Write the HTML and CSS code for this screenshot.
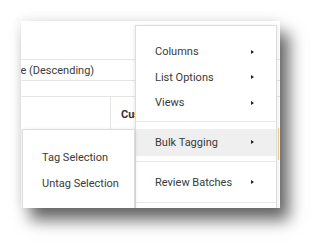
FILE: index.html
```html
<!DOCTYPE html>
<html lang="en">

<head>
    <meta charset="UTF-8">
    <title>Bulk Tagging Menu</title>
    <link rel="stylesheet" href="styles.css">
</head>

<body>
    <div class="shot">
        <!-- Page behind the menus -->
        <div class="sort-row"><span class="sort-text">Name (Descending)</span></div>
        <div class="table-head">
            <div class="cell"></div>
            <div class="cell cell-bold">Customer</div>
        </div>

        <!-- Main context menu -->
        <div class="menu">
            <div class="menu-item">Columns <span class="arrow"></span></div>
            <div class="menu-item">List Options <span class="arrow"></span></div>
            <div class="menu-item">Views <span class="arrow"></span></div>
            <div class="divider divider-first"></div>
            <div class="menu-item active">Bulk Tagging <span class="arrow"></span></div>
            <div class="divider"></div>
            <div class="menu-item menu-item-tall">Review Batches <span class="arrow"></span></div>
            <div class="divider divider-last"></div>
        </div>
        <div class="scroll-mark"></div>

        <!-- Bulk Tagging submenu -->
        <div class="submenu">
            <div class="sub-item">Tag Selection</div>
            <div class="sub-item">Untag Selection</div>
        </div>
    </div>
</body>

</html>
```

FILE: styles.css
```css
body {
    margin: 0;
    width: 322px;
    height: 250px;
    background-color: #ffffff;
    font-family: Roboto, "Liberation Sans", sans-serif;
    font-size: 11px;
    color: #3a3a3a;
    overflow: hidden;
}

.shot {
    position: relative;
    margin: 21px 0 0 21px;
    width: 259px;
    height: 187px;
    padding-top: 38px;
    box-sizing: border-box;
    background-color: #ffffff;
    overflow: hidden;
    box-shadow: 9px 12px 15px rgba(0, 0, 0, 0.6), -2px -2px 10px rgba(0, 0, 0, 0.08);
}

.sort-row {
    height: 22px;
    border-top: 1px solid #e6e6e6;
    border-bottom: 1px solid #e6e6e6;
    box-sizing: border-box;
    display: flex;
    align-items: center;
    white-space: nowrap;
}

.sort-text {
    margin-left: -24px;
}

.table-head {
    margin-top: 15px;
    height: 33px;
    border-top: 1px solid #e6e6e6;
    display: grid;
    grid-template-columns: 89px 1fr;
}

.cell {
    display: flex;
    align-items: center;
    padding-left: 10px;
}

.cell-bold {
    border-left: 1px solid #e6e6e6;
    font-weight: bold;
    color: #333333;
    padding-top: 2px;
}

.menu {
    position: absolute;
    left: 114px;
    top: 4px;
    width: 142px;
    height: 200px;
    padding-top: 13px;
    box-sizing: border-box;
    background-color: #ffffff;
    border: 1px solid #dddddd;
    box-shadow: 0 1px 4px rgba(0, 0, 0, 0.12);
}

.menu-item {
    height: 25.5px;
    display: flex;
    align-items: center;
    justify-content: space-between;
    padding: 0 22px 0 19px;
}

.menu-item.active {
    height: 27px;
    background-color: #efefef;
}

.menu-item-tall {
    height: 31px;
}

.divider {
    height: 5px;
    margin-bottom: 5px;
    border-bottom: 1px solid #e8e8e8;
}

.divider-first {
    margin-bottom: 7px;
}

.divider-last {
    height: 4px;
}

.arrow {
    width: 0;
    height: 0;
    border-top: 2.5px solid transparent;
    border-bottom: 2.5px solid transparent;
    border-left: 3.5px solid #222222;
}

.scroll-mark {
    position: absolute;
    left: 257px;
    top: 107px;
    width: 1px;
    height: 32px;
    background-color: #f2c98f;
}

.submenu {
    position: absolute;
    left: 1px;
    top: 108px;
    width: 113px;
    height: 80px;
    padding-top: 14px;
    box-sizing: border-box;
    background-color: #ffffff;
    border: 1px solid #dddddd;
    box-shadow: 0 1px 4px rgba(0, 0, 0, 0.12);
}

.sub-item {
    height: 26px;
    display: flex;
    align-items: center;
    padding-left: 19px;
    white-space: nowrap;
}
```
